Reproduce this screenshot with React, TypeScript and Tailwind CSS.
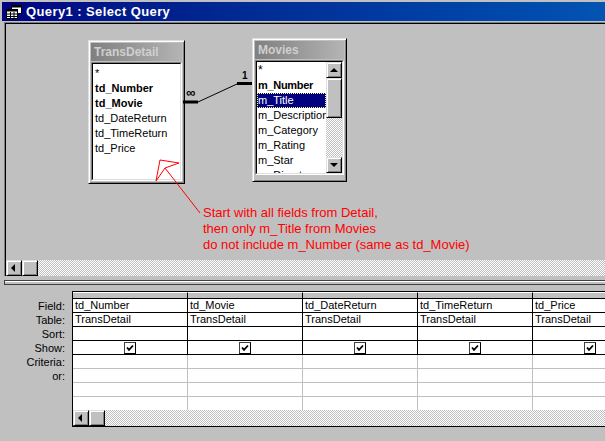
import React from "react";

const raised =
  "bg-[#c0c0c0] border border-t-[#dfdfdf] border-l-[#dfdfdf] border-r-black border-b-black shadow-[inset_1px_1px_0_#ffffff,inset_-1px_-1px_0_#808080]";
const dither =
  "bg-[repeating-conic-gradient(#c0c0c0_0%_25%,#ffffff_0%_50%)] bg-[length:2px_2px]";

const Arrow = ({ dir }: { dir: "left" | "up" | "down" }) => {
  const pts =
    dir === "left" ? "5,0 5,8 1,4" : dir === "up" ? "0,6 8,6 4,2" : "0,2 8,2 4,6";
  return (
    <svg width="8" height="8" viewBox="0 0 8 8">
      <polygon points={pts} fill="#000" />
    </svg>
  );
};

const ScrollBtn = ({ dir }: { dir: "left" | "up" | "down" }) => (
  <div className={`w-[16px] h-[16px] shrink-0 flex items-center justify-center ${raised}`}>
    <Arrow dir={dir} />
  </div>
);

const HScroll = () => (
  <div className="h-[16px] flex shrink-0">
    <ScrollBtn dir="left" />
    <div className={`w-[16px] h-[16px] shrink-0 ${raised}`}></div>
    <div className={`flex-1 ${dither}`}></div>
  </div>
);

const TableBox = ({
  title,
  className,
  children,
}: {
  title: string;
  className: string;
  children: React.ReactNode;
}) => (
  <div className={`absolute flex flex-col px-[2px] pt-[2px] ${raised} ${className}`}>
    <div className="h-[18px] shrink-0 bg-gradient-to-r from-[#808080] to-[#b4b4b4] text-[#cfcfcf] font-bold text-[12px] leading-[18px] pl-[3px]">
      {title}
    </div>
    <div className="flex-1 min-h-0 flex mt-[1px] border border-t-[#808080] border-l-[#808080] border-r-white border-b-white">
      <div className="flex-1 min-h-0 flex border border-t-black border-l-black border-r-[#dfdfdf] border-b-[#dfdfdf] bg-white overflow-hidden">
        {children}
      </div>
    </div>
  </div>
);

const Check = () => (
  <div className="w-[12px] h-[12px] border border-t-[#404040] border-l-[#404040] border-r-black border-b-black bg-white flex items-center justify-center">
    <svg width="8" height="8" viewBox="0 0 8 8">
      <path d="M1 3.5 L3 5.8 L7 1.5" stroke="#000" strokeWidth="1.8" fill="none" />
    </svg>
  </div>
);

const fields = ["td_Number", "td_Movie", "td_DateReturn", "td_TimeReturn", "td_Price"];

export default function App() {
  return (
    <div className="w-[605px] h-[441px] overflow-hidden bg-[#c0c0c0] pt-[2px] font-['Liberation_Sans',Arial,sans-serif] text-black text-[11px]">
      {/* title bar */}
      <div className="ml-[2px] h-[19px] flex items-center bg-gradient-to-r from-[#000080] to-[#0553b3]">
        <svg width="16" height="14" viewBox="0 0 16 14" className="ml-[4px] mt-[1px]">
          <rect x="5.5" y="0.5" width="10" height="8" fill="#fff" stroke="#000" />
          <rect x="5.5" y="0.5" width="10" height="2" fill="#000" />
          <rect x="0.5" y="4.5" width="11" height="9" fill="#fff" stroke="#000" />
          <rect x="0.5" y="4.5" width="11" height="2" fill="#000" />
          <line x1="1" y1="9" x2="11" y2="9" stroke="#000" />
          <line x1="1" y1="11.5" x2="11" y2="11.5" stroke="#000" />
          <line x1="4.5" y1="7" x2="4.5" y2="13" stroke="#000" />
          <line x1="8" y1="7" x2="8" y2="13" stroke="#000" />
        </svg>
        <span className="ml-[4px] text-white font-bold text-[13px] tracking-[0.4px]">
          Query1 : Select Query
        </span>
      </div>

      {/* upper pane */}
      <div className="ml-[4px] mt-[1px] border-t border-l border-[#808080]">
        <div className="border-t border-l border-black">
          <div className="relative h-[236px]">
            <TableBox title="TransDetail" className="left-[82px] top-[16px] w-[97px] h-[144px] pb-[2px]">
              <div className="pt-[2px] pl-[2px] leading-[15px] whitespace-nowrap">
                <div>*</div>
                <div className="font-bold">td_Number</div>
                <div className="font-bold">td_Movie</div>
                <div>td_DateReturn</div>
                <div>td_TimeReturn</div>
                <div>td_Price</div>
              </div>
            </TableBox>

            <TableBox title="Movies" className="left-[246px] top-[14px] w-[95px] h-[144px] pb-[6px]">
              <div className="flex-1 overflow-hidden pt-[1px] leading-[15px] whitespace-nowrap">
                <div className="pl-[1px] text-[12px]">*</div>
                <div className="pl-[1px] font-bold tracking-[-0.3px]">m_Number</div>
                <div className="pl-[1px] bg-[#000080] text-white outline outline-1 outline-dotted outline-[#ffff80] -outline-offset-1">
                  m_Title
                </div>
                <div className="pl-[1px]">m_Description</div>
                <div className="pl-[1px]">m_Category</div>
                <div className="pl-[1px]">m_Rating</div>
                <div className="pl-[1px]">m_Star</div>
                <div className="pl-[1px]">m_Director</div>
              </div>
              <div className="w-[16px] shrink-0 flex flex-col">
                <ScrollBtn dir="up" />
                <div className={`h-[40px] ${raised}`}></div>
                <div className={`flex-1 ${dither}`}></div>
                <ScrollBtn dir="down" />
              </div>
            </TableBox>

            {/* join line and annotation arrow */}
            <svg className="absolute left-0 top-0" width="600" height="236">
              <line x1="177" y1="78" x2="192" y2="78" stroke="#000" strokeWidth="3" />
              <line x1="192" y1="78" x2="231" y2="60" stroke="#000" strokeWidth="1" />
              <line x1="231" y1="59.5" x2="246" y2="59.5" stroke="#000" strokeWidth="3" />
              <polyline
                points="150,157 154,136 173,139 159,144 150,157"
                fill="none"
                stroke="#ff0000"
                strokeWidth="1"
              />
              <line x1="159" y1="144" x2="194" y2="189" stroke="#ff0000" strokeWidth="1" />
            </svg>
            <span className="absolute left-[180px] top-[63px] font-bold text-[13px] leading-[12px]">
              ∞
            </span>
            <span className="absolute left-[236px] top-[47px] font-bold text-[10px] leading-[10px]">
              1
            </span>

            <div className="absolute left-[197px] top-[181px] text-[#ff0000] text-[13px] leading-[16px] whitespace-nowrap">
              <div>Start with all fields from Detail,</div>
              <div>then only m_Title from Movies</div>
              <div>do not include m_Number (same as td_Movie)</div>
            </div>
          </div>
          <HScroll />
        </div>
      </div>

      {/* splitter */}
      <div className="ml-[4px] mt-[4px] h-[5px] border-y border-l border-[#404040] border-t-[#404040]">
        <div className="h-[1px] bg-white"></div>
      </div>

      {/* design grid */}
      <div className="flex mt-[6px] ml-[4px]">
        <div className="w-[68px] shrink-0 pt-[8px] pr-[7px] text-right leading-[14px]">
          <div className="h-[14px]">Field:</div>
          <div className="h-[14px]">Table:</div>
          <div className="h-[14px]">Sort:</div>
          <div className="h-[14px]">Show:</div>
          <div className="h-[14px]">Criteria:</div>
          <div className="h-[14px]">or:</div>
        </div>
        <div className="w-[576px] shrink-0 border-t border-l border-black bg-white">
          <div className="h-[7px] flex border-b border-black bg-[#c0c0c0]">
            {fields.map((f) => (
              <div key={f} className="w-[115px] shrink-0 border-r border-black border-t border-t-white"></div>
            ))}
          </div>
          <div className="h-[14px] flex border-b border-black">
            {fields.map((f) => (
              <div key={f} className="w-[115px] shrink-0 border-r border-black pl-[2px] leading-[13px]">
                {f}
              </div>
            ))}
          </div>
          <div className="h-[14px] flex border-b border-black">
            {fields.map((f) => (
              <div key={f} className="w-[115px] shrink-0 border-r border-black pl-[2px] leading-[13px]">
                TransDetail
              </div>
            ))}
          </div>
          <div className="h-[14px] flex border-b border-black">
            {fields.map((f) => (
              <div key={f} className="w-[115px] shrink-0 border-r border-black"></div>
            ))}
          </div>
          <div className="h-[14px] flex border-b border-black">
            {fields.map((f) => (
              <div key={f} className="w-[115px] shrink-0 border-r border-black flex items-center justify-center">
                <Check />
              </div>
            ))}
          </div>
          {[0, 1, 2].map((r) => (
            <div key={r} className="h-[14px] flex border-b border-[#c0c0c0]">
              {fields.map((f) => (
                <div key={f} className="w-[115px] shrink-0 border-r border-[#c0c0c0]"></div>
              ))}
            </div>
          ))}
          <div className="h-[13px] flex">
            {fields.map((f) => (
              <div key={f} className="w-[115px] shrink-0 border-r border-[#c0c0c0]"></div>
            ))}
          </div>
          <div className="border-b border-black">
            <HScroll />
          </div>
        </div>
      </div>
    </div>
  );
}
